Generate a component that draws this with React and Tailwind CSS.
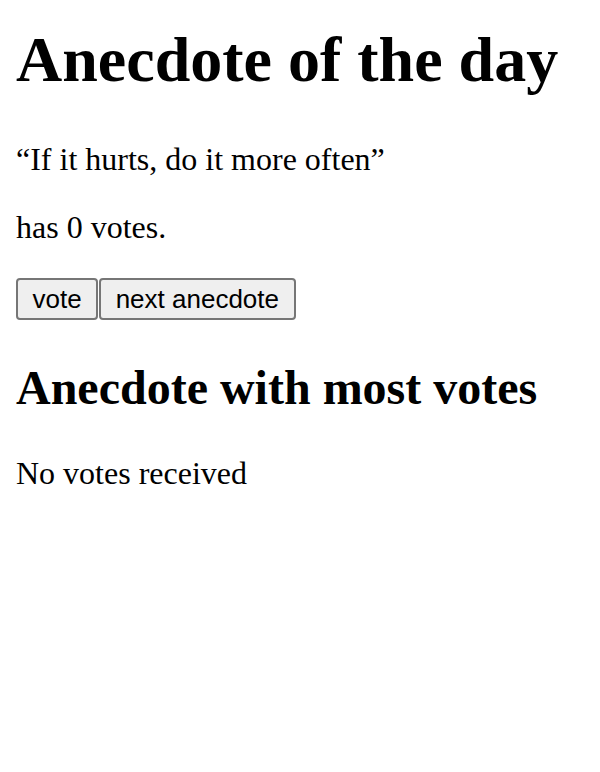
import React, { useState } from 'react';

const anecdotes = ['If it hurts, do it more often'];

const App = () => {
  const [selected] = useState(0);
  const [votes] = useState([0]);

  return (
    <div className="px-4 pt-[24px] bg-white min-h-[772px] text-black font-['Liberation_Serif',serif]">
      <h1 className="text-[64px] leading-[72px] font-bold">Anecdote of the day</h1>
      <p className="mt-[45px] text-[32px] leading-[36px]">“{anecdotes[selected]}”</p>
      <p className="mt-[32px] text-[32px] leading-[36px]">has {votes[selected]} votes.</p>
      <div className="mt-[33px] flex font-['Liberation_Sans',Arial,sans-serif]">
        <button className="h-[42px] px-[14.5px] border-2 border-[#767676] rounded-[4px] bg-[#efefef] text-[26px] leading-none">
          vote
        </button>
        <button className="ml-[1px] h-[42px] px-[14.5px] border-2 border-[#767676] rounded-[4px] bg-[#efefef] text-[26px] leading-none">
          next anecdote
        </button>
      </div>
      <h2 className="mt-[41px] text-[48px] leading-[54px] font-bold">Anecdote with most votes</h2>
      <p className="mt-[40px] text-[32px] leading-[36px]">No votes received</p>
    </div>
  );
};

export default App;
